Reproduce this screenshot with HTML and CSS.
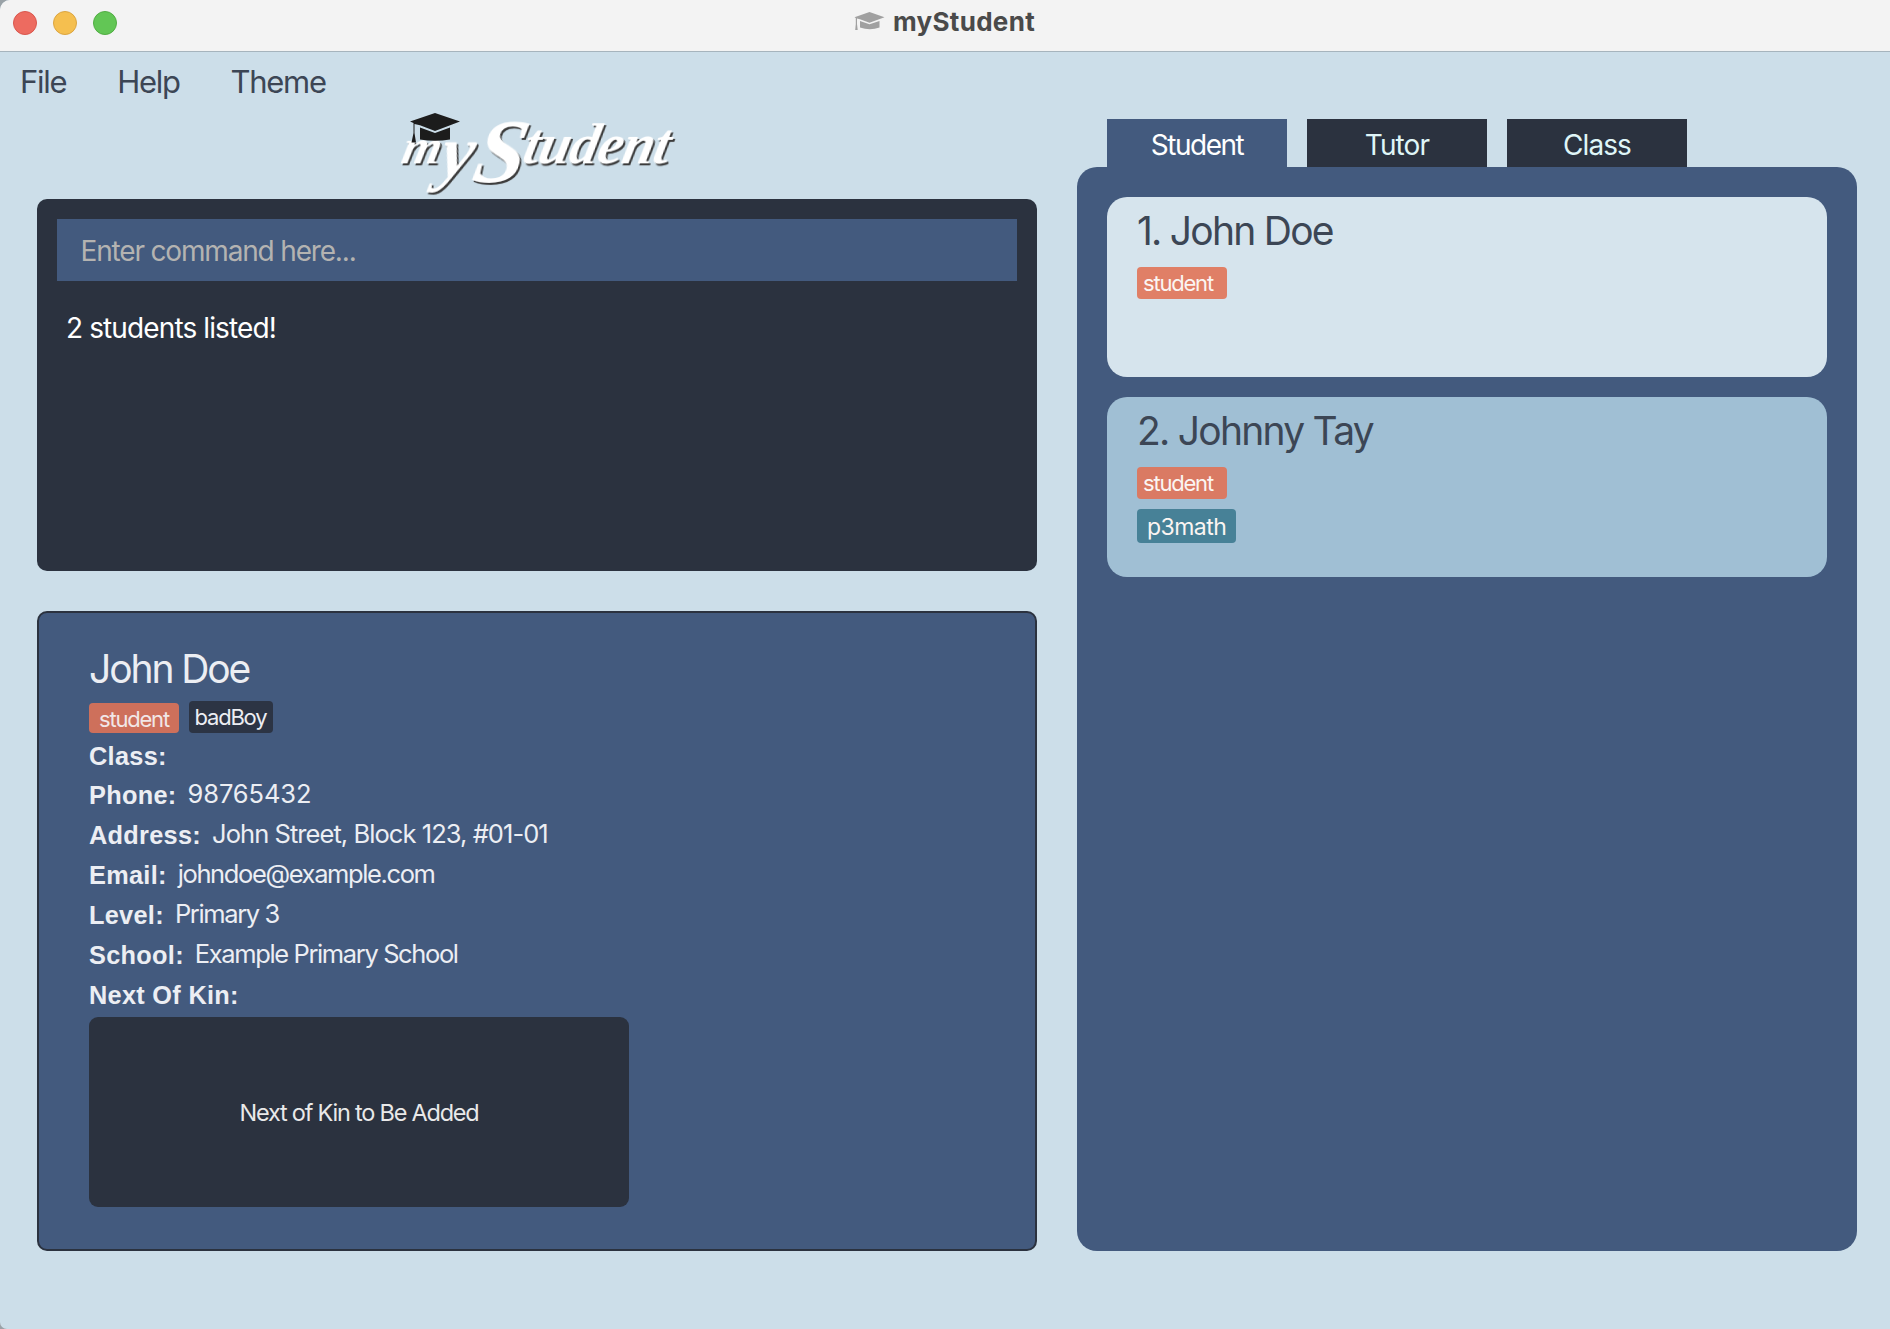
FILE: index.html
```html
<!DOCTYPE html>
<html lang="en">
<head>
<meta charset="utf-8">
<title>myStudent</title>
<link rel="stylesheet" href="styles.css">
</head>
<body>
<div class="window">
  <header class="titlebar">
    <div class="lights"><span class="light red"></span><span class="light yellow"></span><span class="light green"></span></div>
    <div class="title">
      <svg class="title-icon" width="31" height="19" viewBox="0 0 31 19"><path d="M.5 5.200 15.500 0 30.500 5.200 15.500 10.700 6 7.300 3 6.600V12L3.700 18H1.200L1.800 12V5.900Z M6 9 15.500 12.300 25.500 9V15.500Q16 19 6 15.500Z" fill="#a0a0a0"/></svg>
      <span class="title-text">myStudent</span>
    </div>
  </header>
  <nav class="menubar"><span>File</span><span>Help</span><span>Theme</span></nav>
  <main class="content">
    <section class="left">
      <div class="logo">
        <svg width="290" height="87" viewBox="395 112 290 87">
          <g class="lettering" transform="translate(34.600 0) skewX(-12)">
            <text><tspan class="m" x="400" y="163">m</tspan><tspan class="y" x="440" y="177">y</tspan><tspan class="s" x="474" y="182">S</tspan><tspan class="rest" x="521" y="163">tudent</tspan></text>
          </g>
          <path d="M410 121.500 435 113 460 121.500 435 131 420 125.300 414.500 124V133L416 142.500H411.500L413.500 133V123Z M420 127.500 435 133 450 127.500V139.500Q435 142 420 139.500Z" fill="#1c1c1c"/>
        </svg>
      </div>
      <div class="command-panel">
        <div class="command-input">Enter command here...</div>
        <p class="result">2 students listed!</p>
      </div>
      <div class="detail-panel">
        <h2>John Doe</h2>
        <div class="detail-tags"><span class="tag role">student</span><span class="tag note">badBoy</span></div>
        <dl>
          <div class="row first"><dt>Class:</dt></div>
          <div class="row"><dt>Phone:</dt><dd class="digits">98765432</dd></div>
          <div class="row"><dt>Address:</dt><dd class="address">John Street, Block 123, #01-01</dd></div>
          <div class="row"><dt>Email:</dt><dd>johndoe@example.com</dd></div>
          <div class="row"><dt>Level:</dt><dd>Primary 3</dd></div>
          <div class="row"><dt>School:</dt><dd>Example Primary School</dd></div>
          <div class="row"><dt>Next Of Kin:</dt></div>
        </dl>
        <div class="kin">Next of Kin to Be Added</div>
      </div>
    </section>
    <section class="right">
      <div class="tabs"><div class="tab active">Student</div><div class="tab">Tutor</div><div class="tab">Class</div></div>
      <div class="list">
        <article class="card"><h3>1. John Doe</h3><span class="tag role">student</span></article>
        <article class="card alt"><h3>2. Johnny Tay</h3><span class="tag role">student</span><span class="tag class-tag">p3math</span></article>
      </div>
    </section>
  </main>
</div>
</body>
</html>
```
FILE: styles.css
```css
* { box-sizing: border-box; }
html { background: #9aa2a7; }
body { margin: 0; font-family: Inter, "Liberation Sans", sans-serif; }
h2, h3, p, dl, dd { margin: 0; font-weight: 400; }
svg { display: block; overflow: visible; }

.window { width: 1890px; height: 1329px; background: #ccdee9; border-radius: 10px 0 0 7px; overflow: hidden; }

/* Title bar */
.titlebar { height: 52px; background: #f3f3f3; border-bottom: 1px solid #a6b4bd; display: grid; grid-template-columns: 854px 1fr; }
.lights { display: flex; gap: 16px; padding: 11px 0 0 13px; }
.light { width: 24px; height: 24px; border-radius: 50%; border: 1px solid; }
.red { background: #ed6b60; border-color: #d9564d; }
.yellow { background: #f5bf4f; border-color: #dba541; }
.green { background: #62c655; border-color: #51ad43; }
.title { display: flex; gap: 8px; }
.title-icon { margin-top: 12px; }
.title-text { font-size: 26px; font-weight: 700; line-height: 43px; letter-spacing: 0.3px; color: #4a4a4a; }

/* Menu */
.menubar { height: 60px; line-height: 60px; font-size: 31px; letter-spacing: -1.3px; color: #3c4655; padding-left: 20px; display: flex; gap: 51px; }

.content { display: grid; grid-template-columns: 1000px 780px; column-gap: 40px; padding-left: 37px; }

/* Logo */
.logo { height: 87px; padding-left: 358px; }
.lettering { font-family: "Liberation Serif", serif; font-style: italic; font-weight: 700; fill: #fff; filter: drop-shadow(2.5px 2.5px 0 #3b3b3b); }
.m { font-size: 50px; }
.y { font-size: 74px; }
.s { font-size: 92px; }
.rest { font-size: 57px; letter-spacing: -0.6px; }

/* Command box */
.command-panel { height: 372px; background: #2b323f; border-radius: 10px; padding: 20px; }
.command-input { height: 62px; line-height: 64px; background: #435a7e; color: #b4b3b1; font-size: 28px; letter-spacing: -1.17px; padding-left: 23.5px; }
.result { margin: 29px 0 0 9px; line-height: 36px; font-size: 28px; letter-spacing: -0.88px; color: #fff; }

/* Person details */
.detail-panel { height: 640px; margin-top: 40px; background: #435a7e; border: 2px solid #2b323f; border-radius: 10px; padding: 32px 50px; color: #eceef3; }
h2, h3 { font-size: 39px; line-height: 48px; letter-spacing: -1.75px; }
h2 { letter-spacing: -2.1px; }
.detail-tags { height: 32px; margin-top: 8px; display: flex; gap: 10px; align-items: flex-end; }
.tag { display: block; height: 32px; line-height: 32px; border-radius: 4px; font-size: 22px; letter-spacing: -1.2px; color: #fbf5f2; }
.card .role { width: 90px; margin-top: 12px; padding-left: 6px; background: #e07f66; }
.detail-tags .role { width: 90px; height: 30px; padding-left: 10px; background: #ce705b; color: #f1e7e7; }
.note { width: 84px; padding-left: 5.5px; background: #2c3444; color: #eceef3; }
dl { margin-top: 2px; }
.row { display: flex; height: 40px; line-height: 40px; gap: 11px; }
.first { line-height: 42px; }
dt { font-family: "Liberation Sans", Arial, sans-serif; font-weight: 700; font-size: 25.3px; letter-spacing: 0.3px; }
dd { font-size: 25.5px; line-height: 38px; letter-spacing: -1.38px; }
.digits { letter-spacing: -0.1px; }
.address { letter-spacing: -0.94px; }
.kin { width: 540px; height: 190px; margin-top: 2px; background: #2b323f; border-radius: 9px; display: flex; align-items: center; justify-content: center; font-size: 23.5px; letter-spacing: -1.22px; color: #e9e9e9; }

/* Tabs and list */
.right { padding-top: 7px; }
.tabs { display: flex; gap: 20px; padding-left: 30px; }
.tab { width: 180px; height: 48px; background: #2b323f; color: #dff5f7; font-size: 28px; line-height: 53px; letter-spacing: -0.9px; text-align: center; }
.tab.active { background: #435a7e; color: #fff; letter-spacing: -1.5px; }
.list { height: 1084px; background: #435a7e; border-radius: 20px; padding: 30px; display: flex; flex-direction: column; gap: 20px; }
.card { height: 180px; border-radius: 20px; background: #d6e4ed; padding: 10px 30px; color: #3c4655; }
.card.alt { background: #a0bfd4; }
.alt .role { background: #da7a63; }
.class-tag { width: 99px; height: 34px; line-height: 36px; margin-top: 10px; padding-left: 10px; background: #478197; font-size: 23px; letter-spacing: -0.55px; }
```
